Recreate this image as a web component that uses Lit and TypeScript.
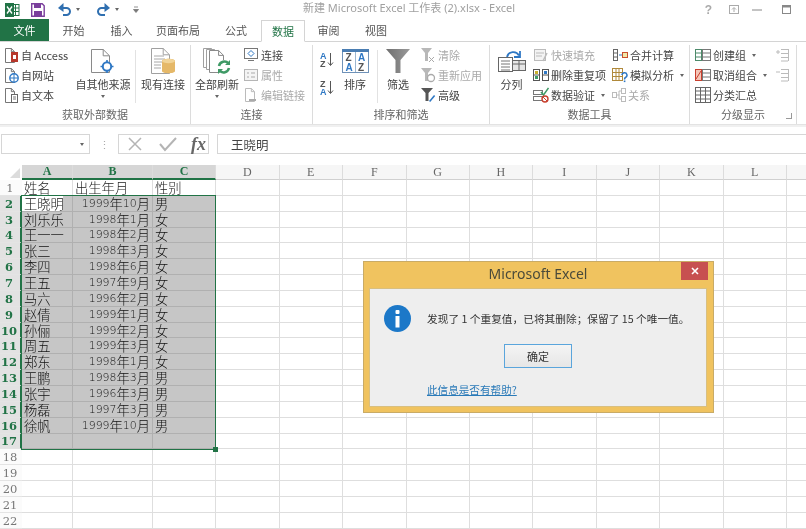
import { LitElement, html, css, svg } from "lit";
import { customElement } from "lit/decorators.js";

const ic = (w: number, h: number, body: unknown) =>
  html`<svg class="ic" width=${w} height=${h} viewBox="0 0 ${w} ${h}">${body}</svg>`;

const page = (x = 1, y = 1, w = 9, h = 12, c = "#777") =>
  svg`<path d="M${x + .5} ${y + .5}h${w * .65}l${w * .35} ${w * .35}V${y + h + .5}H${x + .5}z M${x + w * .65 + .5} ${y + .5}v${w * .35}h${w * .35}" fill="#fff" stroke=${c}/>`;

const I: Record<string, unknown> = {
  access: ic(15, 16, svg`${page(1, 1, 9, 14)}<rect x="7" y="5" width="7" height="10" fill="#b7372b"/><rect x="9" y="8" width="3" height="4" fill="#fff"/>`),
  web: ic(15, 16, svg`${page(1, 1, 9, 14)}<circle cx="10" cy="11" r="4.2" fill="#fff" stroke="#2f78c4" stroke-width="1.4"/><path d="M6 11h8M10 7v8" stroke="#2f78c4"/>`),
  txt: ic(15, 16, svg`${page(1, 1, 9, 14)}<rect x="7.5" y="7.5" width="6" height="8" fill="#fff" stroke="#666"/><path d="M9 10h3M9 12h3" stroke="#777"/>`),
  other: ic(24, 26, svg`${page(0, 1, 18, 23, "#8a8a8a")}<path d="M16 12v13M9.500 18.500h13" stroke="#2f78c4" stroke-width="1.600"/><circle cx="16" cy="18.500" r="4.200" fill="#fff" stroke="#2f78c4" stroke-width="2"/>`),
  conn: ic(24, 26, svg`${page(0, 0, 18, 25, "#a0a0a0")}<path d="M3 8h10M3 11h11M3 14h8M3 17h7M3 20h7" stroke="#a8a8a8"/><path d="M11 13c0-3 13-3 13 0v10c0 3-13 3-13 0z" fill="#e5b868"/><ellipse cx="17.500" cy="13" rx="6.500" ry="2.200" fill="#f1d498"/>`),
  refresh: ic(28, 26, svg`${page(0, 0, 12, 19, "#a0a0a0")}${page(3, 1, 12, 20, "#a0a0a0")}${page(6, 2, 14, 22, "#8a8a8a")}<circle cx="21" cy="19" r="7" fill="#fff"/><path d="M16 18a5.500 5.500 0 0 1 9.500-2.500M26 20a5.500 5.500 0 0 1-9.500 2.500" fill="none" stroke="#3f9a66" stroke-width="2.500"/><path d="M27 12v5h-5zM15 26v-5h5z" fill="#3f9a66"/>`),
  link: ic(16, 16, svg`<rect x="1.5" y="1.5" width="13" height="10" fill="#fff" stroke="#777"/><path d="M5 13.5h6" stroke="#777"/><path d="M8 3.5l3 3-3 3-3-3z" fill="none" stroke="#2f78c4"/>`),
  prop: ic(16, 16, svg`<rect x="1.5" y="2.5" width="13" height="11" fill="#f4f4f4" stroke="#b5b5b5"/><path d="M4 6h2M8 6h4M4 10h2M8 10h4" stroke="#aaa"/>`),
  edit: ic(16, 16, svg`${page(2, 1, 9, 13, "#bbb")}<path d="M6 13h7" stroke="#aaa" stroke-width="2"/>`),
  az: ic(15, 15, svg`<text x="0" y="7" class="st b">A</text><text x="0" y="14.500" class="st b2">Z</text><path d="M10.500 1v12M8 10.500l2.500 3 2.500-3" fill="none" stroke="#555"/>`),
  za: ic(15, 15, svg`<text x="0" y="7" class="st b2">Z</text><text x="0" y="14.500" class="st b">A</text><path d="M10.500 1v12M8 10.500l2.500 3 2.500-3" fill="none" stroke="#555"/>`),
  sort: ic(27, 24, svg`<rect x=".5" y="2.500" width="26" height="21" fill="#fff" stroke="#6f92b8"/><rect x="0" y="0" width="27" height="3" fill="#4a7db2"/><path d="M13.500 3v20" stroke="#9db6cf"/><text x="3.500" y="12" class="st2 b2">Z</text><text x="16" y="12" class="st2 b">A</text><text x="3.500" y="22" class="st2 b">A</text><text x="16" y="22" class="st2 b2">Z</text>`),
  filter: ic(24, 24, svg`<defs><linearGradient id="fg" x1="0" x2="1"><stop offset="0" stop-color="#6f6f6f"/><stop offset="1" stop-color="#9a9a9a"/></linearGradient></defs><path d="M0 0h24L14.500 11v13h-5V11z" fill="url(#fg)"/>`),
  clear: ic(16, 16, svg`<path d="M1 1h11L8 6v8H5V6z" fill="#b8b8b8"/><path d="M9 10l5 5M14 10l-5 5" stroke="#aaa"/>`),
  reapply: ic(16, 16, svg`<path d="M1 1h11L8 6v8H5V6z" fill="#b8b8b8"/><circle cx="11" cy="11" r="3.500" fill="none" stroke="#aaa" stroke-width="1.300"/>`),
  adv: ic(16, 16, svg`<path d="M1 1h12L8.500 6v8h-3V6z" fill="#555"/><path d="M9 14l5-6 1.200 1-5 6z" fill="#2f78c4"/>`),
  split: ic(28, 22, svg`<path d="M9 7a6.500 6.500 0 0 1 12-1.500M22 1v6h-6" fill="none" stroke="#2f78c4" stroke-width="1.800"/><rect x=".5" y="7.500" width="14" height="14" fill="#fff" stroke="#666"/><path d="M3 11h9M3 14h9M3 17h9M3 20h9" stroke="#777"/><rect x="14.500" y="10.500" width="13" height="10" fill="#e6e6e6" stroke="#666"/><path d="M14.500 14h13M21 10.500v10" stroke="#666"/>`),
  flash: ic(16, 16, svg`<rect x="1.500" y="2.500" width="11" height="11" fill="#f3f3f3" stroke="#bbb"/><path d="M3 6h8M3 9h6" stroke="#bbb"/><path d="M10 14l4-8" stroke="#bbb" stroke-width="1.500"/>`),
  dup: ic(16, 16, svg`<rect x=".5" y="2.500" width="6" height="11" fill="#fff" stroke="#555"/><rect x="9.500" y="2.500" width="6" height="11" fill="#fff" stroke="#555"/><rect x="2" y="4" width="3" height="3" fill="#c9b02c"/><rect x="2" y="9" width="3" height="3" fill="#3f9a66"/><path d="M.5 8h6M9.500 8h6" stroke="#555"/><rect x="11" y="4" width="3" height="3" fill="#2f78c4"/>`),
  valid: ic(16, 16, svg`<rect x=".5" y="3.500" width="9" height="4" fill="#fff" stroke="#777"/><rect x=".5" y="9.500" width="9" height="4" fill="#fff" stroke="#777"/><path d="M8 5l2.500 3 5-7" fill="none" stroke="#3f9a66" stroke-width="1.500"/><circle cx="12" cy="12" r="3" fill="#fff" stroke="#c8402f" stroke-width="1.400"/><path d="M10 10l4 4" stroke="#c8402f"/>`),
  merge: ic(16, 16, svg`<rect x="1.500" y="2.500" width="4" height="11" fill="#fff" stroke="#666"/><path d="M1.500 6h4M1.500 10h4" stroke="#666"/><path d="M7 8h3" stroke="#2f78c4"/><rect x="10.500" y="5.500" width="5" height="5" fill="#f2e8a8" stroke="#c8502f"/>`),
  whatif: ic(16, 16, svg`<rect x=".5" y="1.500" width="10" height="12" fill="#fff" stroke="#b0893a"/><path d="M.5 5.500h10M.5 9.500h10M4 1.500v12M7 1.500v12" stroke="#b0893a"/><path d="M10 8a2.500 2.500 0 1 1 3.500 2.500c-1 .6-1 1.200-1 2" fill="none" stroke="#2f78c4" stroke-width="1.500"/><rect x="11.800" y="13.500" width="1.600" height="1.600" fill="#2f78c4"/>`),
  rel: ic(14, 16, svg`<rect x=".5" y="5.500" width="4" height="5" fill="#fff" stroke="#bbb"/><rect x="9.500" y="1.500" width="4" height="5" fill="#fff" stroke="#bbb"/><rect x="9.500" y="9.500" width="4" height="5" fill="#fff" stroke="#bbb"/><path d="M4.500 8h3M7 4v8h2.500M7 4h2.500" fill="none" stroke="#bbb"/>`),
  group: ic(16, 16, svg`<rect x=".5" y="2.500" width="6" height="11" fill="#fff" stroke="#4d8a6a"/><path d="M.5 6h6M.5 10h6" stroke="#4d8a6a"/><rect x="7.500" y="2.500" width="8" height="11" fill="#fff" stroke="#777"/><path d="M7.500 6h8M7.500 10h8" stroke="#777"/>`),
  ungroup: ic(16, 16, svg`<rect x=".5" y="2.500" width="6" height="11" fill="#f4c6b8" stroke="#c8402f"/><path d="M1 12l5-8" stroke="#c8402f"/><rect x="7.500" y="2.500" width="8" height="11" fill="#fff" stroke="#777"/><path d="M7.500 6h8M7.500 10h8" stroke="#777"/>`),
  sub: ic(16, 18, svg`<rect x=".5" y="1.500" width="15" height="15" fill="#fff" stroke="#666"/><path d="M.5 5h15M.5 9h15M.5 13h15M5.500 1.500v15M10.500 1.500v15" stroke="#666"/>`),
  showD: ic(13, 16, svg`<path d="M5 2.500h7M5 6.500h7M5 10.500h7M5 14h7M12.500 2v12" stroke="#bbb" fill="none"/><path d="M0 5h4M2 3v4" stroke="#bbb"/>`),
  hideD: ic(13, 16, svg`<path d="M5 2.500h7M5 6.500h7M5 10.500h7M5 14h7M12.500 2v12" stroke="#bbb" fill="none"/><path d="M0 5h4" stroke="#bbb"/>`),
};

const COLS = [51, 80, 63, 63.5, 63.5, 63.5, 63, 63.5, 63.5, 63.5, 63.5, 63.5, 64];
const LETTERS = "ABCDEFGHIJKLM".split("");
const DATA: [string, string, string][] = [
  ["姓名", "出生年月", "性别"],
  ["王晓明", "1999年10月", "男"],
  ["刘乐乐", "1998年1月", "女"],
  ["王一一", "1998年2月", "女"],
  ["张三", "1998年3月", "女"],
  ["李四", "1998年6月", "女"],
  ["王五", "1997年9月", "女"],
  ["马六", "1996年2月", "女"],
  ["赵倩", "1999年1月", "女"],
  ["孙俪", "1999年2月", "女"],
  ["周五", "1999年3月", "女"],
  ["郑东", "1998年1月", "女"],
  ["王鹏", "1998年3月", "男"],
  ["张宇", "1996年3月", "男"],
  ["杨磊", "1997年3月", "男"],
  ["徐帆", "1999年10月", "男"],
  ["", "", ""],
];

@customElement("app-root")
export class AppRoot extends LitElement {
  static styles = css`
    :host { display: block; width: 806px; height: 529px; overflow: hidden; position: relative; background: #fff;
      font-family: "Noto Sans CJK SC", "Noto Sans", sans-serif; font-size: 11px; color: #444; filter: blur(.3px); }
    .ic { display: block; flex: none; }
    .st, .st2 { font-family: "Liberation Sans", sans-serif; font-weight: 700; }
    .st { font-size: 9px; } .st2 { font-size: 10px; }
    .b { fill: #2f78c4; } .b2 { fill: #555; }
    .title { height: 19px; display: flex; align-items: center; }
    .qat { display: flex; align-items: center; }
    .doc { position: absolute; left: 303px; top: 0; height: 16px; line-height: 15px; color: #a0a0a0; font-size: 11px; font-family: "Noto Sans", "Noto Sans CJK SC", sans-serif; white-space: nowrap; }
    .winbtns { margin-left: auto; display: flex; align-items: center; margin-right: 15px; color: #999; }
    .tabs { display: grid; grid-template-columns: 49px 49px 47px 66px 50px 44px 47px 48px; height: 22px; border-bottom: 1px solid #d4d4d4; box-sizing: content-box; }
    .tab { display: flex; align-items: center; justify-content: center; font-size: 11px; color: #555; padding-bottom: 1px; box-sizing: border-box; }
    .tab.file { background: #217346; color: #fff; }
    .tab.on { background: #fff; color: #217346; border: 1px solid #d4d4d4; border-bottom: 1px solid #fff; height: 22px; margin-bottom: -1px; margin-top: 1px; }
    .ribbon { display: flex; height: 82px; }
    .group { display: flex; flex-direction: column; border-right: 1px solid #dcdcdc; box-sizing: border-box; margin-top: 3px; height: 79px; }
    .body { display: flex; height: 62px; align-items: stretch; }
    .glabel { height: 17px; line-height: 15px; text-align: center; color: #666; font-size: 11px; position: relative; }
    .launch { position: absolute; right: 4px; top: 6px; width: 5px; height: 5px; border: 1px solid #999; border-width: 0 1px 1px 0; }
    .big { display: flex; flex-direction: column; align-items: center; padding-top: 2px; white-space: nowrap; line-height: 14px; }
    .big .t { margin-top: 2px; }
    .big .ico { height: 28px; display: flex; align-items: center; justify-content: center; }
    .caret { width: 0; height: 0; border: 2.500px solid transparent; border-top: 3px solid #666; border-bottom: 0; flex: none; }
    .big .caret { margin-top: 4px; }
    .small { display: flex; flex-direction: column; }
    .sm { height: 20px; display: flex; align-items: center; gap: 2px; white-space: nowrap; line-height: 14px; }
    .sm.off { color: #a9a9a9; }
    .sm .caret { margin-left: 4px; }
    .vsep { width: 1px; background: #e2e2e2; margin: 5px 0 4px; flex: none; }
    .rstrip { height: 2px; background: #f0f0f0; border-top: 1px solid #e3e3e3; }
    .fbar { height: 22px; margin-top: 7px; display: flex; align-items: stretch; background: #fff; }
    .name { width: 89px; margin-left: 1px; border: 1px solid #d6d6d6; box-sizing: border-box; display: flex; align-items: center; justify-content: flex-end; padding-right: 5px; height: 20px; }
    .grip { width: 28px; display: flex; align-items: center; justify-content: center; color: #aaa; height: 20px; }
    .fbtns { width: 91px; border: 1px solid #d6d6d6; box-sizing: border-box; height: 20px; display: flex; align-items: center; }
    .fxin { margin-left: 8px; flex: 1; border: 1px solid #d6d6d6; border-right: 0; height: 20px; box-sizing: border-box; display: flex; align-items: center; padding-left: 13px; font-size: 12.500px; color: #444; }
    .fx { font-family: "Liberation Serif", serif; font-style: italic; font-weight: 700; font-size: 18px; color: #666; margin-left: 14px; line-height: 16px; }
    .sheet { position: relative; margin-top: 9px; display: grid; grid-template-rows: 15px; grid-auto-rows: 15.850px; }
    .corner { background: #fff; position: relative; }
    .corner::after { content: ""; position: absolute; right: 2px; bottom: 2px; border: 5px solid transparent; border-right-color: #dcdcdc; border-bottom-color: #dcdcdc; }
    .ch { display: flex; align-items: center; justify-content: center; font-family: "Liberation Serif", serif; font-size: 12px; color: #666; background: #f6f6f6; border-right: 1px solid #dcdcdc; border-bottom: 1px solid #d0d0d0; box-sizing: border-box; }
    .ch.sel { background: #d6d6d6; color: #217346; font-weight: 700; border-bottom: 2px solid #217346; }
    .rh { display: flex; align-items: center; justify-content: center; font-family: "DejaVu Serif", serif; font-size: 11.500px; color: #777; background: #fbfbfb; border-bottom: 1px solid #e4e4e4; box-sizing: border-box; padding: 1px 2px 0 0; }
    .rh.sel { background: #e2e2e2; color: #217346; font-weight: 700; border-right: 2px solid #217346; }
    .c { border-right: 1px solid #dedede; border-bottom: 1px solid #dedede; box-sizing: border-box; font-size: 13.300px; line-height: 15px; color: #1c1c1c; padding: 0 2px; white-space: nowrap; display: flex; align-items: center; font-weight: 300; }
    .c.sel { background: #c6c6c6; border-color: #b0b0b0; color: #111; }
    .c.active { background: linear-gradient(90deg, #fff 41px, #c6c6c6 41px); }
    .c.r { justify-content: flex-end; }
    .num { font-family: "DejaVu Sans", sans-serif; font-size: 10.900px; }
    .selbox { position: absolute; left: 21px; top: 30px; width: 195px; height: 255px; border: 1.500px solid #217346; box-sizing: border-box; pointer-events: none; }
    .selbox::after { content: ""; position: absolute; right: -3px; bottom: -3px; width: 5px; height: 5px; background: #217346; }
    .dlg { position: absolute; left: 363px; top: 261px; width: 351px; height: 152px; box-sizing: border-box; background: #f0c35f; border: 1px solid #c9ab66; padding: 0 6px 5px 5px; display: flex; flex-direction: column; }
    .dtitle { height: 26px; flex: none; display: flex; align-items: center; justify-content: center; font-family: "Noto Sans", sans-serif; font-size: 14px; color: #4a4a3a; position: relative; padding-bottom: 3px; box-sizing: border-box; }
    .close { position: absolute; right: -1px; top: 0; width: 27px; height: 18px; background: #c75050; display: flex; align-items: center; justify-content: center; }
    .dbody { flex: 1; background: #eeeeee; border: 1px solid #d8bf80; display: flex; flex-direction: column; padding: 15px 20px 0 14px; box-sizing: border-box; }
    .msg { display: flex; align-items: center; gap: 16px; height: 28px; font-size: 10.700px; color: #333; white-space: pre; }
    .btn { margin: 12px auto 0 auto; width: 68px; height: 24px; box-sizing: border-box; border: 1px solid #5aa5dc; background: linear-gradient(#f4f4f4, #e6e6e6); display: flex; align-items: center; justify-content: center; font-size: 11px; color: #333; position: relative; left: 3px; }
    .help { margin: 14px 0 0 43px; color: #2a7ab8; text-decoration: underline; font-size: 10.600px; line-height: 16px; }
  `;

  big(icon: unknown, label: string, w: number, caret = false) {
    return html`<div class="big" style="width:${w}px">
      <div class="ico">${icon}</div><div class="t">${label}</div>${caret ? html`<div class="caret"></div>` : ""}</div>`;
  }
  sm(icon: unknown, label: string, off = false, caret = false) {
    return html`<div class="sm ${off ? "off" : ""}">${icon}<span>${label}</span>${caret ? html`<span class="caret"></span>` : ""}</div>`;
  }

  render() {
    const cols = `22px ${COLS.map(c => c + "px").join(" ")}`;
    return html`
      <div class="title">
        <div class="qat">
          <svg class="ic" style="margin-left:5px" width="15" height="14" viewBox="0 0 15 14"><rect x="7" y="1.500" width="7" height="11" fill="#fff" stroke="#217346"/><path d="M7 5h7M7 8.500h7M10.500 1.500v11" stroke="#217346"/><rect x="0" y="0" width="9" height="14" fill="#217346"/><path d="M2 3.500l5 7M7 3.500l-5 7" stroke="#fff" stroke-width="1.300"/></svg>
          <svg class="ic" style="margin-left:11px" width="14" height="14" viewBox="0 0 14 14"><path d="M.7.7h10.500l2 2v10.600H.7z" fill="#fff" stroke="#7a3f9c" stroke-width="1.400"/><rect x="3" y="1" width="7" height="4" fill="#7a3f9c"/><rect x="3" y="8" width="8" height="5" fill="#7a3f9c"/></svg>
          <svg class="ic" style="margin-left:13px" width="13" height="13" viewBox="0 0 13 13"><path d="M2 5h6.500a3.500 3.500 0 0 1 0 7H5" fill="none" stroke="#2f6fb0" stroke-width="2"/><path d="M5.500 0v9L0 5z" fill="#2f6fb0"/></svg>
          <span class="caret" style="margin-left:5px"></span>
          <svg class="ic" style="margin-left:17px" width="13" height="13" viewBox="0 0 13 13"><path d="M11 5H4.500a3.500 3.500 0 0 0 0 7H8" fill="none" stroke="#2f6fb0" stroke-width="2"/><path d="M7.500 0v9L13 5z" fill="#2f6fb0"/></svg>
          <span class="caret" style="margin-left:5px"></span>
          <svg class="ic" style="margin-left:14px" width="7" height="7" viewBox="0 0 7 7"><path d="M1 1h4M.5 3.500l2.500 3 2.500-3z" stroke="#777" fill="#777" stroke-width=".8"/></svg>
        </div>
        <div class="doc">新建 Microsoft Excel 工作表 (2).xlsx - Excel</div>
        <div class="winbtns">
          <span style="font-family:'Liberation Sans',sans-serif;font-weight:700;font-size:12px;color:#aaa;margin-right:17px">?</span>
          <svg class="ic" style="margin-right:13px" width="10" height="9" viewBox="0 0 10 9"><rect x=".5" y=".5" width="9" height="8" fill="none" stroke="#aaa"/><path d="M5 3v4M3 4.500l2-2 2 2" fill="none" stroke="#aaa"/></svg>
          <svg class="ic" style="margin-right:20px" width="10" height="2" viewBox="0 0 10 2"><path d="M0 1h10" stroke="#888"/></svg>
          <svg class="ic" width="9" height="9" viewBox="0 0 9 9"><rect x=".5" y=".5" width="8" height="8" fill="none" stroke="#888"/><path d="M0 1.500h9" stroke="#888" stroke-width="2"/></svg>
        </div>
      </div>
      <div class="tabs">
        <div class="tab file">文件</div><div class="tab">开始</div><div class="tab">插入</div><div class="tab">页面布局</div>
        <div class="tab">公式</div><div class="tab on">数据</div><div class="tab">审阅</div><div class="tab">视图</div>
      </div>
      <div class="ribbon">
        <div class="group" style="width:191px">
          <div class="body">
            <div class="small" style="width:73px;padding-left:4px;box-sizing:border-box">
              ${this.sm(I.access, "自 Access")}${this.sm(I.web, "自网站")}${this.sm(I.txt, "自文本")}
            </div>
            ${this.big(I.other, "自其他来源", 60, true)}
            <div class="vsep" style="margin-left:2px"></div>
            ${this.big(I.conn, "现有连接", 54)}
          </div>
          <div class="glabel">获取外部数据</div>
        </div>
        <div class="group" style="width:122px">
          <div class="body">
            ${this.big(I.refresh, "全部刷新", 52, true)}
            <div class="small">${this.sm(I.link, "连接")}${this.sm(I.prop, "属性", true)}${this.sm(I.edit, "编辑链接", true)}</div>
          </div>
          <div class="glabel">连接</div>
        </div>
        <div class="group" style="width:177px">
          <div class="body">
            <div class="small" style="padding:7px 0 0 7px;width:26px;box-sizing:border-box;gap:13px">${I.az}${I.za}</div>
            ${this.big(I.sort, "排序", 32)}
            <div class="vsep" style="margin-left:6px"></div>
            ${this.big(I.filter, "筛选", 40)}
            <div class="small" style="margin-left:2px">${this.sm(I.clear, "清除", true)}${this.sm(I.reapply, "重新应用", true)}${this.sm(I.adv, "高级")}</div>
          </div>
          <div class="glabel">排序和筛选</div>
        </div>
        <div class="group" style="width:200px">
          <div class="body">
            ${this.big(I.split, "分列", 43)}
            <div class="small" style="width:79px">${this.sm(I.flash, "快速填充", true)}${this.sm(I.dup, "删除重复项")}${this.sm(I.valid, "数据验证", false, true)}</div>
            <div class="small">${this.sm(I.merge, "合并计算")}${this.sm(I.whatif, "模拟分析", false, true)}${this.sm(I.rel, "关系", true)}</div>
          </div>
          <div class="glabel">数据工具</div>
        </div>
        <div class="group" style="width:107px">
          <div class="body" style="padding-left:5px">
            <div class="small" style="width:81px">${this.sm(I.group, "创建组", false, true)}${this.sm(I.ungroup, "取消组合", false, true)}${this.sm(I.sub, "分类汇总")}</div>
            <div class="small"><div class="sm">${I.showD}</div><div class="sm">${I.hideD}</div></div>
          </div>
          <div class="glabel">分级显示<span class="launch"></span></div>
        </div>
      </div>
      <div class="rstrip"></div>
      <div class="fbar">
        <div class="name"><span class="caret"></span></div>
        <div class="grip">⋮</div>
        <div class="fbtns">
          <svg class="ic" style="margin-left:8px" width="16" height="16" viewBox="0 0 16 16"><path d="M2 2l12 12M14 2L2 14" stroke="#b4b4b4" stroke-width="1.500"/></svg>
          <svg class="ic" style="margin-left:16px" width="18" height="16" viewBox="0 0 18 16"><path d="M1 8l5 6L17 2" fill="none" stroke="#b4b4b4" stroke-width="2"/></svg>
          <span class="fx">fx</span>
        </div>
        <div class="fxin">王晓明</div>
      </div>
      <div class="sheet" style="grid-template-columns:${cols}">
        <div class="corner"></div>
        ${LETTERS.map((l, i) => html`<div class="ch ${i < 3 ? "sel" : ""}">${l}</div>`)}
        ${Array.from({ length: 22 }, (_, r) => {
          const row = DATA[r];
          const inSel = r >= 1 && r <= 16;
          return html`<div class="rh ${inSel ? "sel" : ""}">${r + 1}</div>
            ${LETTERS.map((_l, c) => {
              const v = row && c < 3 ? row[c] : "";
              const sel = inSel && c < 3;
              const right = c === 1 && r > 0;
              const m = right ? /^(\d+)年(\d+)月$/.exec(v) : null;
              return html`<div class="c ${sel ? "sel" : ""} ${r === 1 && c === 0 ? "active" : ""} ${right ? "r" : ""}">${m
                ? html`<span class="num">${m[1]}</span>年<span class="num">${m[2]}</span>月`
                : v}</div>`;
            })}`;
        })}
        <div class="selbox"></div>
      </div>
      <div class="dlg">
        <div class="dtitle">Microsoft Excel
          <div class="close"><svg class="ic" width="8" height="8" viewBox="0 0 8 8"><path d="M1 1l6 6M7 1L1 7" stroke="#fff" stroke-width="1.600"/></svg></div>
        </div>
        <div class="dbody">
          <div class="msg">
            <svg class="ic" width="27" height="27" viewBox="0 0 27 27"><circle cx="13.500" cy="13.500" r="13.500" fill="#1c78c8"/><rect x="11.500" y="5" width="4" height="4" rx="1" fill="#fff"/><rect x="11.500" y="11" width="4" height="11.500" fill="#fff"/></svg>
            <span>发现了 1 个重复值，已将其删除；保留了 15 个唯一值。</span>
          </div>
          <div class="btn">确定</div>
          <div class="help">此信息是否有帮助?</div>
        </div>
      </div>
    `;
  }
}
